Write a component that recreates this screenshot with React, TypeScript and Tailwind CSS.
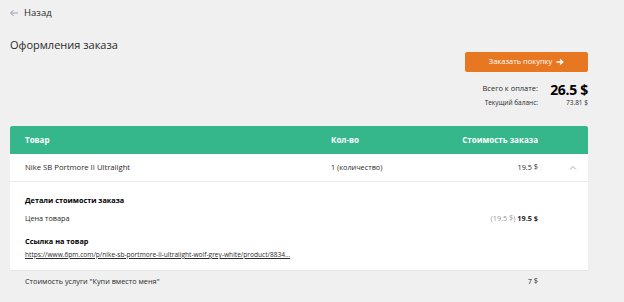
import React from 'react';

function ArrowLeft() {
    return (
        <svg width="10" height="10" viewBox="0 0 10 10" className="text-gray-400">
            <path d="M9 5H1.5M4.5 2L1.5 5l3 3" fill="none" stroke="currentColor" strokeWidth="1" />
        </svg>
    );
}

export default function App() {
    return (
        <div className="w-[624px] h-[302px] bg-[#f0f0f0] text-[#2a2a2a] overflow-hidden font-['Open_Sans',sans-serif]">
            {/* Back */}
            <div className="flex items-center gap-[5px] pl-[9px] h-[26px] text-[9.5px]">
                <ArrowLeft />
                <span>Назад</span>
            </div>

            {/* Title + summary */}
            <div className="flex justify-between pl-[10px] pr-[36px]">
                <h1 className="mt-[12px] text-[11px] leading-[14px]">Оформления заказа</h1>
                <div className="flex flex-col items-end mt-[26px]">
                    <button className="w-[123px] h-[20px] bg-[#e87722] text-white text-[7.5px] rounded-[2px] flex items-center justify-center gap-[4px]">
                        Заказать покупку
                        <svg width="8" height="8" viewBox="0 0 8 8">
                            <path d="M0.5 4H6.5M4 1.5L6.8 4 4 6.5" fill="none" stroke="white" strokeWidth="1.3" />
                        </svg>
                    </button>
                    <div className="flex items-center h-[16px] mt-[9px] text-[7.5px]">
                        <span>Всего к оплате:</span>
                        <span className="w-[50px] text-right text-[14px] font-bold text-black tracking-[-0.3px]">26.5 $</span>
                    </div>
                    <div className="flex items-center h-[12px] text-[6.5px]">
                        <span>Текущий баланс:</span>
                        <span className="w-[50px] text-right">73.81 $</span>
                    </div>
                </div>
            </div>

            {/* Table */}
            <div className="mx-[10px] mt-[17px] w-[578px] bg-white text-[7.3px]">
                <div className="flex items-center h-[28px] bg-[#35b78b] text-white font-bold text-[8px] rounded-t-[2px]">
                    <div className="w-[321px] pl-[15px]">Товар</div>
                    <div className="flex-1">Кол-во</div>
                    <div className="w-[100px] text-right">Стоимость заказа</div>
                    <div className="w-[50px]" />
                </div>
                <div className="flex items-center h-[28px] border-b border-[#ececec]">
                    <div className="w-[321px] pl-[15px] text-[7.7px]">Nike SB Portmore II Ultralight</div>
                    <div className="flex-1">1 (количество)</div>
                    <div className="w-[100px] text-right">19.5 $</div>
                    <div className="w-[50px] flex justify-end pr-[11px]">
                        <svg width="8" height="6" viewBox="0 0 8 6">
                            <path d="M1 4.5L4 1.5 7 4.5" fill="none" stroke="#aaa" strokeWidth="1" />
                        </svg>
                    </div>
                </div>
                <div className="pl-[15px] pt-[11px] pb-[8px] border-b border-[#e6e6e6]">
                    <div className="font-bold text-black h-[14px] flex items-center">Детали стоимости заказа</div>
                    <div className="flex items-center h-[22px]">
                        <span className="w-[306px]">Цена товара</span>
                        <span className="flex-1" />
                        <span className="w-[100px] text-right">
                            <span className="text-[#999]">(19.5 $)</span> <span className="font-bold">19.5 $</span>
                        </span>
                        <span className="w-[50px]" />
                    </div>
                    <div className="font-bold text-black h-[14px] flex items-center mt-[5px]">Ссылка на товар</div>
                    <div className="h-[14px] flex items-center">
                        <span className="underline text-[6.6px]">https://www.6pm.com/p/nike-sb-portmore-ii-ultralight-wolf-grey-white/product/8834...</span>
                    </div>
                </div>
            </div>
            <div className="mx-[10px] w-[578px] flex items-center h-[20px] text-[7.3px]">
                <div className="w-[321px] pl-[15px]">Стоимость услуги "Купи вместо меня"</div>
                <div className="flex-1" />
                <div className="w-[100px] text-right">7 $</div>
                <div className="w-[50px]" />
            </div>
        </div>
    );
}
